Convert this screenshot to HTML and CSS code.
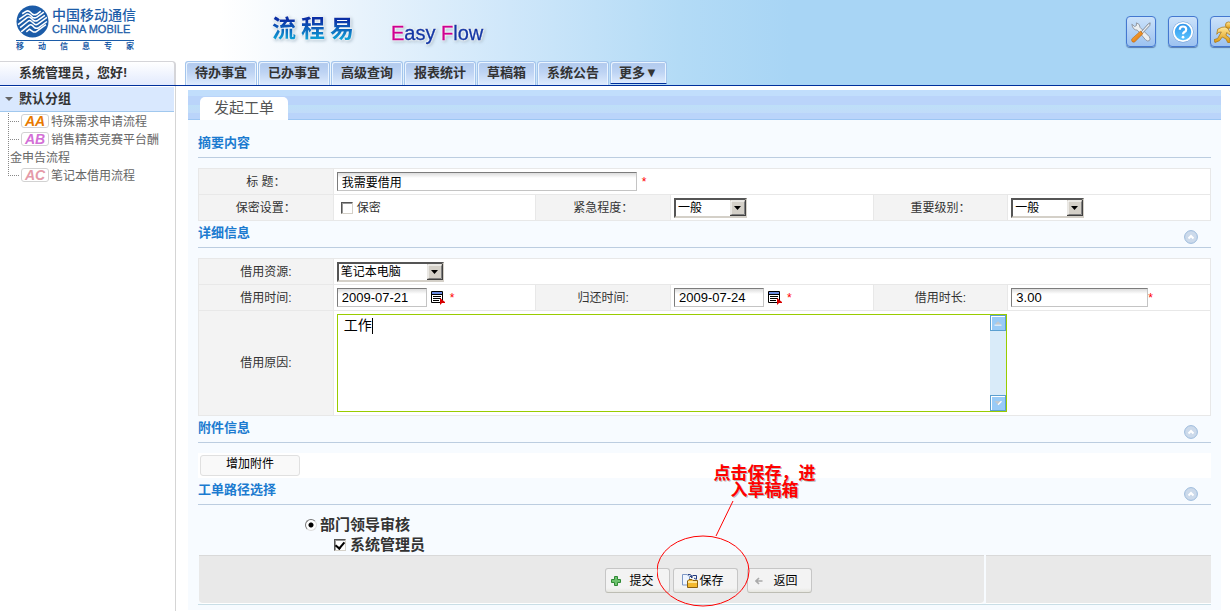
FILE: index.html
```html
<!DOCTYPE html>
<html lang="zh-CN">
<head>
<meta charset="utf-8">
<title>流程易 Easy Flow</title>
<link rel="stylesheet" href="styles.css">
</head>
<body>
<svg class="defs" width="0" height="0" aria-hidden="true">
  <defs>
    <linearGradient id="orange" x1="0" y1="0" x2="1" y2="1"><stop offset="0" stop-color="#ffb54a"/><stop offset="1" stop-color="#d96a00"/></linearGradient>
    <linearGradient id="sky" x1="0" y1="0" x2="0" y2="1"><stop offset="0" stop-color="#2f93ea"/><stop offset="1" stop-color="#5cc6ff"/></linearGradient>
    <linearGradient id="gold" x1="0" y1="0" x2="0" y2="1"><stop offset="0" stop-color="#ffe79a"/><stop offset="1" stop-color="#dd9a10"/></linearGradient>
    <symbol id="collapse" viewBox="0 0 14 14"><circle cx="7" cy="7" r="6.4" fill="#ccdaeb" stroke="#9dbbdc"/><path d="M4.500 8.500 7 6l2.500 2.500" fill="none" stroke="#fff" stroke-width="2"/></symbol>
    <symbol id="calendar" viewBox="0 0 14 14"><path d="M.5.5h11v11H.5z" fill="#fff" stroke="#000"/><path d="M1 1h10v2H1z" fill="#6a8be0"/><path d="M1 3.500h10M2 5.500h8M2 7.500h8M2 9.500h6" stroke="#000"/><path d="M9 7v7l2-2h3v-1z" fill="#d80000"/></symbol>
    <symbol id="drop" viewBox="0 0 16 16"><path d="M0 0h16v16H0z" fill="#404040"/><path d="M0 0h15v15H0z" fill="#d4d0c8"/><path d="M1 14V1h13" fill="none" stroke="#fff"/><path d="M1.500 14.500h13v-13" fill="none" stroke="#808080"/><path d="M4 6h7L7.500 10z" fill="#000"/></symbol>
  </defs>
</svg>
<header class="header">
  <div class="brand">
    <div class="logo">
      <div class="logo-main">
        <svg class="logo-mark" viewBox="0 0 32 32" aria-hidden="true">
          <circle cx="16" cy="16" r="15.500" fill="#1c5ca8"/>
          <g fill="none" stroke="#fff" stroke-width="1.500" stroke-linejoin="round">
            <path d="M6 8.500 10 6q2-1 4 1l2 2q2 1 4 0l4-3"/>
            <path d="M3 14l7-5q2-1 4 1l2 2q2 1 4 0l7-5"/>
            <path d="M2 19l9-7q2-1 4 1l2 2q2 1 4 0l7-5"/>
            <path d="M4 22l8-6.500q1.500-1 3 .5l3 2.500q1.500 1 3 0l9-6.500"/>
            <path d="M5 26l8-6.500q1.500-1 3 .5l2 2q2 1 4 0l8-6"/>
            <path d="M10 26l3-2.500 3 2q2 1.500 4 0l9-6.500"/>
          </g>
        </svg>
        <div class="logo-text"><span class="logo-cn">中国移动通信</span><span class="logo-en">CHINA MOBILE</span></div>
      </div>
      <div class="logo-tag"><span>移</span><span>动</span><span>信</span><span>息</span><span>专</span><span>家</span></div>
    </div>
    <div class="greeting">系统管理员，您好!</div>
  </div>
  <div class="banner">
    <div class="banner-top">
      <div class="product"><span>流</span><span>程</span><span>易</span></div>
      <div class="product-en"><b>E</b>asy <b>F</b>low</div>
      <div class="tools">
        <button class="tool" type="button" aria-label="设置"><svg viewBox="0 0 24 24">
          <path d="M2 3.500 5 6l2-1V2q4 1 4 5l10 10q2 3 0 4.500-2 1-4-1L8 10Q3 10 2 3.500z" fill="#eceff2" stroke="#8b929c"/>
          <path d="M22 2l-2 1-8 9 1.500 1.500L21.500 5z" fill="#e8ebef" stroke="#7e8791"/>
          <path d="M11.500 11 2 19.500q-1 4 3 3.500L14 14z" fill="url(#orange)" stroke="#b85c00" stroke-width=".6"/></svg></button>
        <button class="tool" type="button" aria-label="帮助"><svg viewBox="0 0 24 24">
          <circle cx="12" cy="12" r="11.500" fill="#6f9fd8"/><circle cx="12" cy="12" r="10" fill="url(#sky)" stroke="#fff" stroke-width="2"/>
          <path d="M8.500 9.500Q8.500 6 12 6t3.500 3.200Q15.500 11 13.500 12 12 13 12 14.500" fill="none" stroke="#fff" stroke-width="2.400"/><circle cx="12" cy="17.700" r="1.500" fill="#fff"/></svg></button>
        <button class="tool" type="button" aria-label="退出"><svg viewBox="0 0 24 24">
          <path d="M4 9q5-3 8-2.500l3 1 2 4 5 1v2.500l-6-.5-2-2-1 3 4 3 1 5h-3l-2-4-4-2-3 4-5 2-1-3 4-1.500 4-7-3 .5-2 2z" fill="url(#gold)" stroke="#a87510" stroke-width=".8"/>
          <circle cx="16" cy="4.500" r="3.500" fill="url(#gold)" stroke="#a87510" stroke-width=".8"/></svg></button>
      </div>
    </div>
    <nav class="nav">
      <a href="#">待办事宜</a><a href="#">已办事宜</a><a href="#">高级查询</a><a href="#">报表统计</a><a href="#">草稿箱</a><a href="#">系统公告</a><a href="#" class="more">更多▼</a>
    </nav>
  </div>
</header>
<div class="body">
  <aside class="sidebar">
    <div class="group"><span class="caret"></span>默认分组</div>
    <ul class="tree">
      <li><a href="#"><span class="badge badge-aa">AA</span>特殊需求申请流程</a></li>
      <li><a href="#"><span class="badge badge-ab">AB</span>销售精英竞赛平台酬金申告流程</a></li>
      <li><a href="#"><span class="badge badge-ac">AC</span>笔记本借用流程</a></li>
    </ul>
  </aside>
  <main class="main">
    <div class="tabbar"><span class="tab">发起工单</span></div>
    <form class="form">
      <h2 class="section"><span>摘要内容</span></h2>
      <table class="grid">
        <colgroup><col class="col-label"><col class="col-value"><col class="col-label"><col class="col-value"><col class="col-label"><col class="col-value"></colgroup>
        <tr>
          <th><label for="title">标 题：</label></th>
          <td colspan="5"><div class="field"><input class="text wide cjk" id="title" type="text" value="我需要借用"><span class="req">*</span></div></td>
        </tr>
        <tr>
          <th>保密设置：</th>
          <td><label class="field check"><input class="box" type="checkbox">保密</label></td>
          <th><label for="urgency">紧急程度：</label></th>
          <td><div class="field"><span class="picker short"><select id="urgency"><option>一般</option></select><svg><use href="#drop"/></svg></span></div></td>
          <th><label for="level">重要级别：</label></th>
          <td><div class="field"><span class="picker short"><select id="level"><option>一般</option></select><svg><use href="#drop"/></svg></span></div></td>
        </tr>
      </table>
      <h2 class="section"><span>详细信息</span><button class="fold" type="button" aria-label="收起"><svg><use href="#collapse"/></svg></button></h2>
      <table class="grid">
        <colgroup><col class="col-label"><col class="col-value"><col class="col-label"><col class="col-value"><col class="col-label"><col class="col-value"></colgroup>
        <tr>
          <th><label for="resource">借用资源:</label></th>
          <td colspan="5"><div class="field"><span class="picker long"><select id="resource"><option>笔记本电脑</option></select><svg><use href="#drop"/></svg></span></div></td>
        </tr>
        <tr>
          <th><label for="from">借用时间:</label></th>
          <td><div class="field"><input class="text date" id="from" type="text" value="2009-07-21"><button class="cal" type="button" aria-label="选择日期"><svg><use href="#calendar"/></svg></button><span class="req">*</span></div></td>
          <th><label for="to">归还时间:</label></th>
          <td><div class="field"><input class="text date" id="to" type="text" value="2009-07-24"><button class="cal" type="button" aria-label="选择日期"><svg><use href="#calendar"/></svg></button><span class="req">*</span></div></td>
          <th><label for="hours">借用时长:</label></th>
          <td><div class="field"><input class="text hours" id="hours" type="text" value="3.00"><span class="req tight">*</span></div></td>
        </tr>
        <tr>
          <th><label for="reason">借用原因:</label></th>
          <td colspan="5" class="area-cell"><div class="area">
            <textarea id="reason">工作</textarea><span class="cursor"></span>
            <div class="scroll">
              <button type="button" aria-label="向上"><svg viewBox="0 0 16 16"><path d="M4 10l4-4 4 4z" fill="#c4c8cc"/><path d="M4 10.500h8" stroke="#fff"/></svg></button>
              <button type="button" aria-label="向下"><svg viewBox="0 0 16 16"><path d="M4 6h8l-4 4z" fill="#c4c8cc"/><path d="M8 10l4-4" stroke="#fff" stroke-width="1.500"/></svg></button>
            </div>
          </div></td>
        </tr>
      </table>
      <h2 class="section"><span>附件信息</span><button class="fold" type="button" aria-label="收起"><svg><use href="#collapse"/></svg></button></h2>
      <div class="attach"><button type="button">增加附件</button></div>
      <h2 class="section last"><span>工单路径选择</span><button class="fold" type="button" aria-label="收起"><svg><use href="#collapse"/></svg></button></h2>
      <div class="route">
        <label><input class="dot" type="radio" name="route" checked>部门领导审核</label>
        <label class="person"><input class="box" type="checkbox" checked>系统管理员</label>
      </div>
      <div class="actions">
        <div class="actions-main">
          <button class="act" type="button"><svg class="plus" viewBox="0 0 10 10"><path d="M3.500.5h3v3h3v3h-3v3h-3v-3h-3v-3h3z" fill="#6fc36f" stroke="#318a36"/></svg><span>提交</span></button>
          <div class="save">
            <button class="act" type="button"><svg class="folder" viewBox="0 0 16 16"><path d="M.5 1.500H5l2.500 2V12h-7z" fill="#eef5ff" stroke="#7d97c4"/><path d="M6 1.500q3-1 4 2.500M8 3l2 2V2M11 2.500h3.500V6M12 5l2.500 1.500" fill="none" stroke="#203a80"/><path d="M5.500 14.500V8L7 6.500h3l1 1h4.500v7z" fill="#f4b92f" stroke="#8a6010"/><path d="M6 9h9" stroke="#ffe79a" stroke-width="2"/></svg><span>保存</span></button>
            <div class="note" aria-hidden="true">
              <svg viewBox="0 0 94 108"><ellipse cx="46" cy="71" rx="46" ry="35" fill="none" stroke="#f00"/><path d="M76 1 59 36" stroke="#f00"/></svg>
            </div>
            <div class="note-text">点击保存，进<br>入草稿箱</div>
          </div>
          <button class="act back" type="button"><svg class="arrow" viewBox="0 0 8 8"><path d="M7.500 4H1M4 1 1 4l3 3" fill="none" stroke="#aaa" stroke-width="1.600"/></svg><span>返回</span></button>
        </div>
        <div class="actions-side"></div>
      </div>
    </form>
  </main>
</div>
</body>
</html>
```
FILE: styles.css
```css
* { box-sizing: border-box; }
body {
  margin: 0;
  min-height: 100vh;
  display: flex;
  flex-direction: column;
  overflow-x: hidden;
  background: #fff;
  color: #333;
  font: 12px/18px "Liberation Sans", "Noto Sans CJK SC", sans-serif;
}
button, input, select, textarea { font: inherit; color: #000; margin: 0; padding: 0; border-radius: 0; }
button { border: 0; background: none; }
svg { display: block; }
a { color: inherit; text-decoration: none; }
.defs { position: absolute; }

/* header */
.header {
  display: grid;
  grid-template-columns: 176px 1fr;
  height: 86px;
  overflow: hidden;
  border-bottom: 1px solid #00309c;
  background: linear-gradient(90deg, #fff 220px, #e8f3fc 360px, #cfe7fa 510px, #b3dbf6 680px, #a8d5f5 790px);
}
.brand { display: flex; flex-direction: column; justify-content: space-between; }
.logo { width: 118px; margin: 5px 0 0 16px; color: #1c5ca8; }
.logo-main { display: flex; gap: 3px; height: 36px; border-bottom: 1px solid #1c5ca8; }
.logo-mark { width: 33px; height: 33px; flex: none; }
.logo-text { display: flex; flex-direction: column; padding-top: 3px; white-space: nowrap; }
.logo-cn { font-size: 14px; line-height: 15px; font-weight: 500; }
.logo-en { font-size: 11px; line-height: 13px; -webkit-text-stroke: 0.3px #1c5ca8; }
.logo-tag { display: flex; justify-content: space-between; font-size: 8px; line-height: 12px; font-weight: bold; }
.greeting {
  height: 24px;
  padding-left: 19px;
  border: 1px solid #d5d5d9;
  border-width: 1px 2px 0 0;
  border-radius: 0 4px 0 0;
  background: linear-gradient(#fff, #e2eafd);
  font-size: 13px;
  line-height: 21px;
  font-weight: bold;
}
.banner { display: flex; flex-direction: column; justify-content: space-between; min-width: 0; }
.banner-top { display: flex; }
.product {
  display: flex;
  gap: 5px;
  margin: 11px 0 0 96px;
  font-size: 24px;
  line-height: 36px;
  font-weight: bold;
  color: transparent;
  background: linear-gradient(#0b2fa5 25%, #10a5d8 80%);
  -webkit-background-clip: text;
  background-clip: text;
  filter: drop-shadow(0 0 1px #fff) drop-shadow(0 0 1px #fff) drop-shadow(1px 1px 1px #a8bccb);
}
.product-en {
  margin: 21px 0 0 37px;
  color: #1437a5;
  font-size: 20px;
  line-height: 24px;
  -webkit-text-stroke: 0.3px;
  filter: drop-shadow(0 0 1px #fff) drop-shadow(0 0 1px #fff) drop-shadow(1px 1px 1px #a8bccb);
}
.product-en b { color: #cf0091; font-weight: normal; }
.tools { display: flex; gap: 12px; margin: 16px -10px 0 auto; }
.tool {
  display: grid;
  place-items: center;
  width: 30px;
  height: 31px;
  border: 1px solid #4478d0;
  border-radius: 4px;
  background: linear-gradient(#cbe2fa, #9cc2f0);
  box-shadow: 0 1px 1px #567cae;
}
.tool svg { width: 22px; height: 22px; }
.nav { display: flex; gap: 1px; padding-left: 9px; }
.nav a {
  height: 24px;
  padding: 0 9px;
  border: 1px solid #a4c5ec;
  border-bottom: 0;
  border-radius: 3px 3px 0 0;
  box-shadow: inset 1px 1px #eaf4ff, inset -1px 0 #eaf4ff;
  background: linear-gradient(#b4ccef 3px, #bdd3f3 10px, #deebfd);
  font-size: 13px;
  line-height: 22px;
  font-weight: bold;
  white-space: nowrap;
}
.nav .more { height: 23px; padding: 0 8px; border-bottom: 1px solid #00309c; }

/* sidebar */
.body { flex: 1; display: grid; grid-template-columns: 176px 1fr; column-gap: 12px; }
.sidebar { border-right: 1px solid #d5d5d5; padding: 1px 1px 0 0; }
.group {
  display: flex;
  align-items: center;
  gap: 6px;
  height: 25px;
  padding-left: 5px;
  border-bottom: 1px solid #a1c8ee;
  background: #d9e8fe;
  font-size: 13px;
  font-weight: bold;
}
.caret { border: 4px solid transparent; border-top: 4px solid #666; border-bottom: 0; }
.tree { list-style: none; margin: 1px 12px 0 8px; padding: 0; color: #666; }
.tree li {
  padding-left: 2px;
  background:
    repeating-linear-gradient(#888 0 1px, transparent 1px 2px) 0 0 / 1px 100% no-repeat,
    repeating-linear-gradient(90deg, #888 0 1px, transparent 1px 2px) 0 8px / 11px 1px no-repeat;
}
.tree li:last-child {
  background:
    repeating-linear-gradient(#888 0 1px, transparent 1px 2px) 0 0 / 1px 9px no-repeat,
    repeating-linear-gradient(90deg, #888 0 1px, transparent 1px 2px) 0 8px / 11px 1px no-repeat;
}
.badge {
  display: inline-block;
  width: 28px;
  height: 14px;
  margin: 0 2px 0 11px;
  border: 1px solid #d2d2d2;
  border-radius: 3px;
  font: italic bold 14px/13px "Liberation Sans", sans-serif;
  text-align: center;
}
.badge-aa { color: #e87a00; }
.badge-ab { color: #d36fd6; }
.badge-ac { color: #e59aa8; }

/* work area */
.main { margin: 4px 9px 1px 0; background: #f7fbff; }
.tabbar {
  display: flex;
  align-items: flex-end;
  height: 30px;
  padding-left: 12px;
  background: linear-gradient(#c1defc 6px, #bad4fa 6px 15px, #bedff8 15px, #c1dbf9 23px, #bad4fa 23px 29px, #9dc6f3 29px);
}
.tab {
  height: 23px;
  padding: 0 14px;
  border-radius: 5px 5px 0 0;
  background: #fff;
  color: #555;
  font-size: 15px;
  line-height: 22px;
}
.form { padding: 11px 10px 5px; }
.section {
  display: flex;
  justify-content: space-between;
  align-items: flex-end;
  height: 27px;
  margin: 0 0 10px;
  padding-right: 13px;
  border-bottom: 1px solid #bccde0;
  color: #1c7bd0;
  font-size: 13px;
  line-height: 24px;
}
.section span { align-self: flex-start; }
.fold { margin-bottom: 3px; }
.fold svg { width: 14px; height: 14px; }
.last { margin-bottom: 0; }

.grid { width: 100%; table-layout: fixed; border-collapse: collapse; background: #fff; }
.col-label { width: 13.3%; }
.col-value { width: 20%; }
.grid th, .grid td { height: 26px; padding: 0; border: 1px solid #e8e8e8; }
.grid th { background: #f3f3f3; font-weight: normal; text-align: center; }
.grid td { padding-left: 3px; }
.field { display: flex; align-items: center; height: 20px; }
.check { gap: 4px; padding-left: 4px; }
.text {
  height: 19px;
  padding-left: 4px;
  border: 1px solid #c4c4c4;
  border-top-color: #7c7c7c;
  border-left-color: #7c7c7c;
  background: linear-gradient(#dcdcdc, #fff 5px);
  font-size: 13px;
}
.cjk { font-size: 12px; }
.wide { width: 300px; }
.date { width: 90px; }
.hours { width: 137px; }
.cal { margin-left: 4px; }
.cal svg { width: 14px; height: 14px; }
.req { margin-left: 5px; color: #f00; }
.tight { margin-left: 0; }
.box {
  appearance: none;
  display: inline-grid;
  place-items: center;
  width: 12px;
  height: 12px;
  border: 1px solid;
  border-color: #555 #d4d0c8 #d4d0c8 #555;
  box-shadow: inset 1px 1px #999;
  background: #fff;
}
.box:checked::after {
  content: "";
  width: 4px;
  height: 7px;
  margin-bottom: 2px;
  border: solid #000;
  border-width: 0 2px 2px 0;
  transform: rotate(40deg);
}
.picker { position: relative; display: block; height: 20px; }
.short { width: 73px; }
.long { width: 107px; }
.picker select {
  appearance: none;
  width: 100%;
  height: 20px;
  padding: 0 18px 0 2px;
  border: 2px solid;
  border-color: #555 #d4d0c8 #d4d0c8 #555;
  background: #fff;
  line-height: 16px;
}
.picker svg { position: absolute; top: 2px; right: 1px; width: 16px; height: 16px; pointer-events: none; }
.grid .area-cell { padding: 3px; }
.area { position: relative; display: flex; width: 670px; max-width: 100%; height: 98px; border: 1px solid #9c0; background: #fff; }
.area textarea { flex: 1; padding: 2px 6px; border: 0; outline: 0; resize: none; background: none; font-size: 14px; line-height: 17px; }
.cursor { position: absolute; left: 34px; top: 3px; width: 1px; height: 16px; background: #000; }
.scroll { display: flex; flex-direction: column; justify-content: space-between; width: 16px; background: #d9ebf9; }
.scroll button { width: 16px; height: 16px; border: 1px solid #5b9fd0; box-shadow: inset 1px 1px #fff; background: #99cbf7; }
.scroll svg { width: 14px; height: 14px; }

.attach { padding: 2px; height: 25px; background: #fff; }
.attach button {
  display: block;
  width: 100px;
  height: 21px;
  border: 1px solid #e0e0e0;
  border-radius: 3px;
  background: #f9f9f9;
  line-height: 17px;
  padding-bottom: 2px;
}
.route { display: grid; padding: 10px 0 0 107px; font-size: 15px; line-height: 20px; font-weight: bold; }
.route label { display: flex; align-items: center; gap: 3px; height: 20px; }
.route .person { padding-left: 29px; gap: 4px; }
.dot {
  appearance: none;
  width: 12px;
  height: 12px;
  border: 1px solid;
  border-color: #777 #ddd #ddd #777;
  border-radius: 50%;
  background: #fff;
}
.dot:checked { background: radial-gradient(#000 2px, #fff 3px); }

.actions { display: grid; grid-template-columns: 777fr 223fr; column-gap: 2px; border-bottom: 1px solid #c9dee6; }
.actions-main, .actions-side { height: 49px; border-top: 1px solid #d9d9d9; border-bottom: 1px solid #fff; background: #e9e9e9; }
.actions-main { display: flex; justify-content: flex-end; gap: 3px; padding: 12px 172px 0 0; border-radius: 0 0 4px 4px; margin-left: 1px; }
.act {
  display: flex;
  align-items: center;
  width: 65px;
  height: 25px;
  padding-left: 5px;
  border: 1px solid #c6c6c6;
  border-bottom-color: #bdbdb4;
  border-radius: 3px;
  background: linear-gradient(#f3f3f3 19px, #e6e6e0);
  white-space: nowrap;
}
.plus { width: 10px; height: 10px; margin-right: 9px; }
.folder { width: 16px; height: 16px; margin: 0 2px 0 3px; }
.arrow { width: 8px; height: 8px; margin: 0 11px 0 2px; }
.back { margin-left: 6px; }
.save { position: relative; }
.note { position: absolute; left: -16px; top: -68px; pointer-events: none; }
.note svg { width: 94px; height: 108px; }
.note-text {
  position: absolute;
  left: 36px;
  top: -103px;
  width: 112px;
  color: #f00;
  font-size: 17px;
  line-height: 17px;
  font-weight: bold;
  text-align: center;
  text-shadow: 1px 1px #bbb;
}
```
